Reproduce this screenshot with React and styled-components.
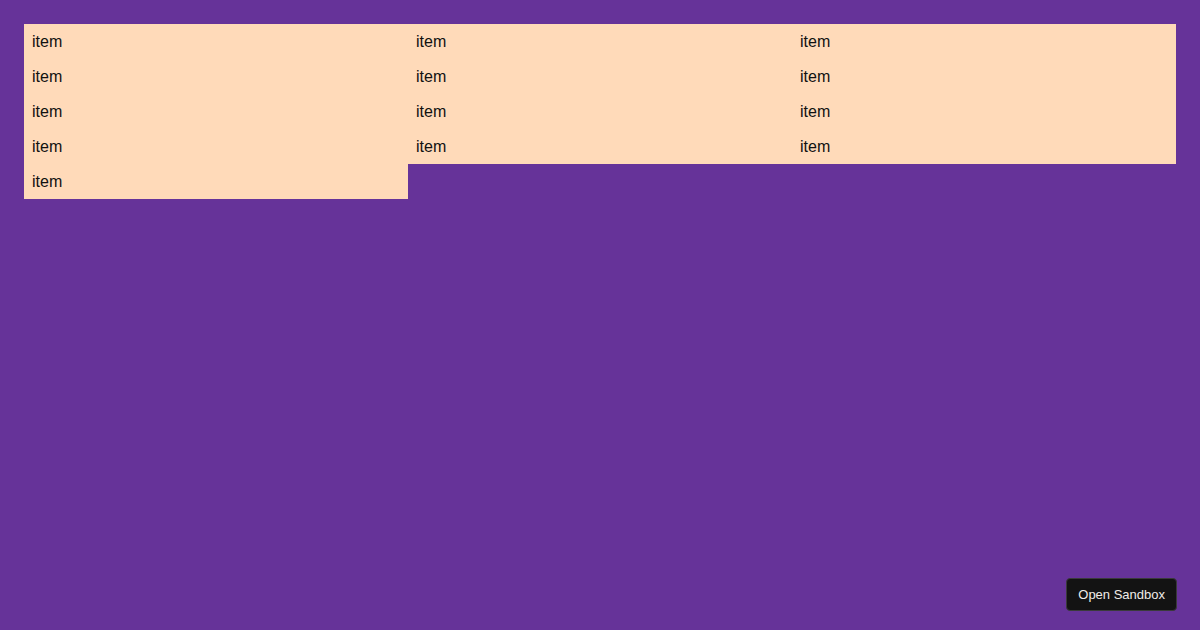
import React from "react";
import styled, { createGlobalStyle } from "styled-components";

const GlobalStyle = createGlobalStyle`
  html, body {
    margin: 0;
    padding: 0;
    height: 100%;
    background: #663399;
  }
  body {
    font-family: "Liberation Sans", Arial, sans-serif;
  }
`;

const Page = styled.div`
  position: relative;
  min-height: 630px;
  box-sizing: border-box;
  padding: 24px;
  background: #663399;
`;

const Grid = styled.div`
  display: grid;
  grid-template-columns: repeat(3, 1fr);
`;

const Item = styled.div`
  background: #ffdab9;
  color: #111;
  font-size: 16px;
  line-height: 19px;
  padding: 8px;
`;

const SandboxButton = styled.button`
  position: absolute;
  right: 23px;
  bottom: 19px;
  height: 33px;
  padding: 0 11px;
  background: #131313;
  color: #f0ece8;
  border: 1px solid #3a3a3a;
  border-radius: 4px;
  font-family: "Liberation Sans", Arial, sans-serif;
  font-size: 13px;
  cursor: pointer;
`;

const items = Array.from({ length: 13 }, () => "item");

const App = () => {
  return (
    <>
      <GlobalStyle />
      <Page>
        <Grid>
          {items.map((label, i) => (
            <Item key={i}>{label}</Item>
          ))}
        </Grid>
        <SandboxButton>Open Sandbox</SandboxButton>
      </Page>
    </>
  );
};

export default App;
